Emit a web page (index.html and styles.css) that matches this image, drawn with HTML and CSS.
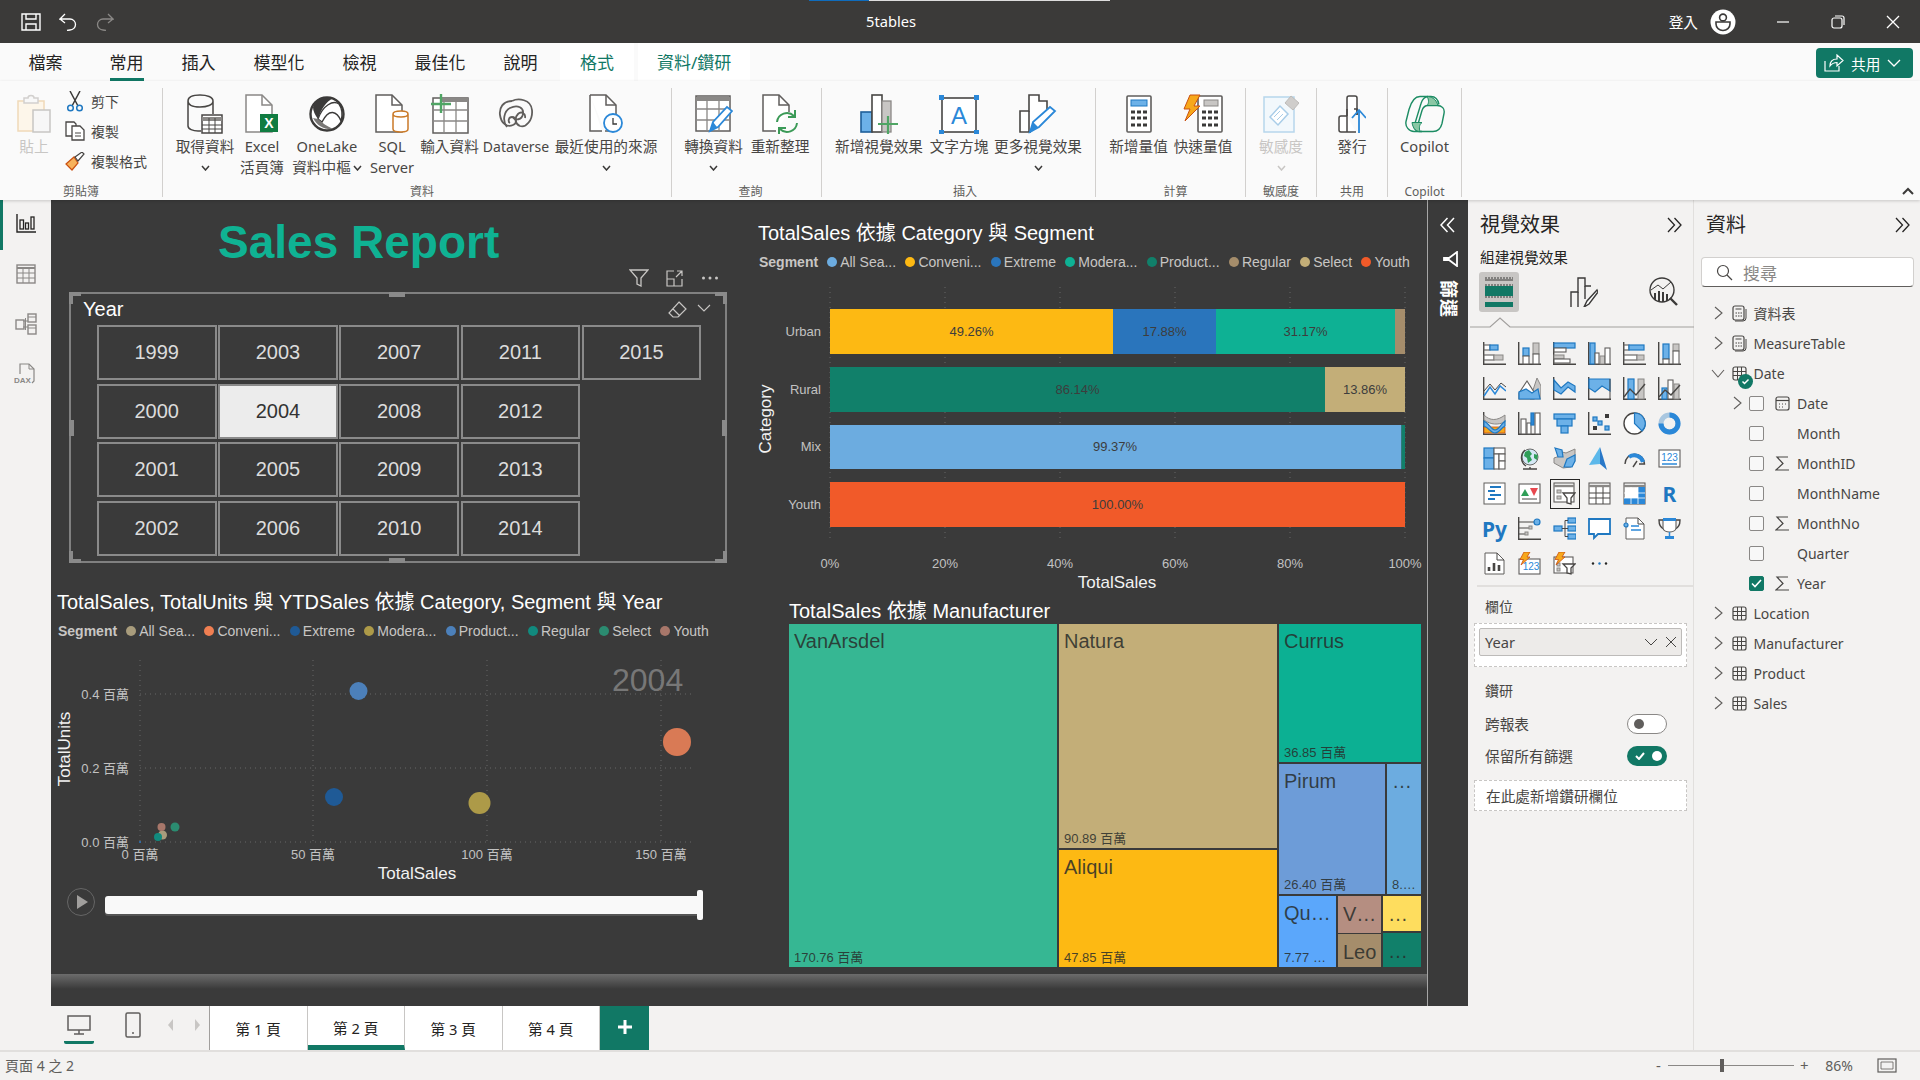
FILE: index.html
```html
<!DOCTYPE html>
<html lang="zh-Hant">
<head>
<meta charset="utf-8">
<title>5tables - Power BI Desktop</title>
<link rel="stylesheet" href="styles.css">
</head>
<body>
<header class="titlebar">
  <div class="progress"><i class="p1"></i><i class="p2"></i></div>
  <div class="tb-left">
    <svg class="ic-save" width="20" height="18" viewBox="0 0 20 18"><path d="M1 1H19V17H1ZM5 1V6H15V1M5 17V11H15V17" fill="none" stroke="#fff" stroke-width="1.4"/></svg>
    <svg class="ic-undo" width="18" height="18" viewBox="0 0 18 18"><path d="M6 1L1 6H11A5.5 5.5 0 0 1 11 17L8 17.500M1 6L6 10" fill="none" stroke="#fff" stroke-width="1.3"/></svg>
    <svg class="ic-redo" width="18" height="18" viewBox="0 0 18 18"><path d="M12 1L17 6H7A5.500 5.500 0 0 0 7 17L10 17.500M17 6L12 10" fill="none" stroke="#8a8886" stroke-width="1.3"/></svg>
  </div>
  <div class="doc-title">5tables</div>
  <div class="tb-right">
    <span class="signin">登入</span>
    <svg class="avatar" width="26" height="26" viewBox="0 0 26 26"><circle cx="13" cy="13" r="12.500" fill="#fff"/><circle cx="13" cy="8.500" r="3.400" fill="none" stroke="#3b3a39" stroke-width="1.600"/><path d="M6 13H20V15A7 6.500 0 0 1 6 15Z" fill="none" stroke="#3b3a39" stroke-width="1.600"/></svg>
    <svg class="win w-min" width="14" height="14" viewBox="0 0 14 14"><path d="M1 7H13" stroke="#fff" stroke-width="1.200"/></svg>
    <svg class="win w-max" width="14" height="14" viewBox="0 0 14 14"><rect x="1" y="3" width="10" height="10" rx="2" fill="none" stroke="#fff" stroke-width="1.200"/><path d="M4 1H11A2 2 0 0 1 13 3V10" fill="none" stroke="#fff" stroke-width="1.200"/></svg>
    <svg class="win w-close" width="14" height="14" viewBox="0 0 14 14"><path d="M1 1L13 13M13 1L1 13" stroke="#fff" stroke-width="1.300"/></svg>
  </div>
</header>

<nav class="tabs">
  <span class="tab t-first">檔案</span>
  <span class="tab active">常用</span>
  <span class="tab">插入</span>
  <span class="tab">模型化</span>
  <span class="tab">檢視</span>
  <span class="tab">最佳化</span>
  <span class="tab">說明</span>
  <span class="tab ctx">格式</span>
  <span class="tab ctx ctx2">資料/鑽研</span>
  <button class="share">
    <svg width="20" height="18" viewBox="0 0 20 18"><path d="M1 7V17H15V12M6 12C6 7 9 5 13 5V1L19 6.500L13 12V8.500C10 8.500 8 9.500 6 12Z" fill="none" stroke="#fff" stroke-width="1.200"/></svg>
    <span>共用</span>
    <svg width="14" height="8" viewBox="0 0 14 8"><path d="M1 1L7 7L13 1" fill="none" stroke="#fff" stroke-width="1.300"/></svg>
  </button>
</nav>

<section class="ribbon">
  <div class="group g-clip">
    <div class="g-body">
      <div class="rb w58 dis">
        <svg width="34" height="38" viewBox="0 0 34 38"><rect x="1" y="6" width="26" height="30" fill="#fdf6ea" stroke="#f0d9b8" stroke-width="1.500"/><path d="M7 6V3H11A3 2.500 0 0 1 17 3H21V8H7Z" fill="#f8f8f8" stroke="#d2d0ce" stroke-width="1.500"/><rect x="16" y="15" width="17" height="22" fill="#f7f7f7" stroke="#c8c6c4" stroke-width="1.500"/></svg>
        <span class="lb">貼上</span>
      </div>
      <div class="small-col">
        <div class="sm"><svg width="16" height="21" viewBox="0 0 16 21"><path d="M3 0L11 15M13 0L5 15" stroke="#3b3a39" stroke-width="1.500"/><circle cx="3.500" cy="17" r="2.800" fill="none" stroke="#1f78c1" stroke-width="1.500"/><circle cx="12.500" cy="17" r="2.800" fill="none" stroke="#1f78c1" stroke-width="1.500"/></svg><span>剪下</span></div>
        <div class="sm"><svg width="20" height="20" viewBox="0 0 20 20"><path d="M1 1H9L11 3V15H1Z" fill="#fff" stroke="#484644" stroke-width="1.300"/><path d="M7 5H15L19 9V19H7Z" fill="#fff" stroke="#484644" stroke-width="1.300"/><path d="M10 12H16M10 15H16" stroke="#484644"/></svg><span>複製</span></div>
        <div class="sm"><svg width="20" height="19" viewBox="0 0 20 19"><path d="M1 12L9 5L13 11L7 18Z" fill="#f7b25c" stroke="#ca5010" stroke-width="1.200"/><path d="M10 5L17 0L19 2L13 9Z" fill="#fff" stroke="#484644" stroke-width="1.200"/></svg><span>複製格式</span></div>
      </div>
    </div>
    <div class="g-label">剪貼簿</div>
  </div>

  <div class="group g-data">
    <div class="g-body">
      <div class="rb w64">
        <svg width="36" height="40" viewBox="0 0 36 40"><path d="M1 7V32C1 35 6 37 11 37H14M1 7C1 3 6 1 13 1S26 3 26 7V20M1 7C1 11 6 13 13 13S26 11 26 7" fill="none" stroke="#484644" stroke-width="1.500"/><rect x="15" y="21" width="20" height="18" fill="#fff" stroke="#484644" stroke-width="1.500"/><path d="M15 25H35" stroke="#8a8886" stroke-width="4"/><path d="M15 31H35M15 35H35M22 24V39M28 24V39" stroke="#484644" stroke-width="1"/></svg>
        <span class="lb">取得資料</span><svg class="chev" width="9" height="6" viewBox="0 0 9 6"><path d="M1 1L4.500 5L8 1" fill="none" stroke="#3b3a39" stroke-width="1.500"/></svg>
      </div>
      <div class="rb w50">
        <svg width="34" height="40" viewBox="0 0 34 40"><path d="M1 1H17L27 11V38H1Z" fill="#fff" stroke="#8a8886" stroke-width="1.500"/><path d="M17 1V11H27" fill="none" stroke="#8a8886" stroke-width="1.500"/><rect x="15" y="20" width="18" height="18" fill="#107c41"/><text x="24" y="34" class="xl">X</text></svg>
        <span class="lb">Excel<br>活頁簿</span>
      </div>
      <div class="rb w80">
        <svg width="36" height="38" viewBox="0 0 36 38"><circle cx="18" cy="19" r="16.500" fill="#fff" stroke="#3b3a39" stroke-width="2.400"/><path d="M4 12C8 3 15 0 24 3C17 7 12 14 9 24C6 20 4 16 4 12Z" fill="#3b3a39"/><path d="M9 24C14 10 24 5 30 9C33 13 34 20 32 26C28 16 20 13 13 27Z" fill="#fff" stroke="#3b3a39" stroke-width="1.400"/><path d="M4 23C8 31 16 35 24 34C18 31 13 28 9 24Z" fill="#7a7876"/></svg>
        <span class="lb">OneLake<br><span class="inl">資料中樞<svg class="chev-in" width="9" height="6" viewBox="0 0 9 6"><path d="M1 1L4.500 5L8 1" fill="none" stroke="#3b3a39" stroke-width="1.500"/></svg></span></span>
      </div>
      <div class="rb w50">
        <svg width="34" height="40" viewBox="0 0 34 40"><path d="M1 1H17L27 11V38H1Z" fill="#fff" stroke="#605e5c" stroke-width="1.500"/><path d="M17 1V11H27" fill="none" stroke="#605e5c" stroke-width="1.500"/><path d="M18 20V35C18 37 22 38 26 38S33 37 33 35V20C33 18 30 17 26 17S18 18 18 20ZM18 20C18 22 22 23 26 23S33 22 33 20" fill="#fff" stroke="#ca7a28" stroke-width="1.500"/></svg>
        <span class="lb">SQL<br>Server</span>
      </div>
      <div class="rb w65">
        <svg width="38" height="40" viewBox="0 0 38 40"><rect x="2" y="4" width="35" height="35" fill="#fff" stroke="#605e5c" stroke-width="1.500"/><path d="M10 6H37" stroke="#8a8886" stroke-width="4"/><path d="M2 16H37M2 27H37M13 4V39M25 4V39" stroke="#8a8886" stroke-width="1.300"/><path d="M10 0V19M0 10H20" stroke="#4fa564" stroke-width="2.400"/></svg>
        <span class="lb">輸入資料</span>
      </div>
      <div class="rb w68">
        <svg class="dv" width="36" height="30" viewBox="0 0 36 30"><path d="M14 2C5 2 1 9 2 16C3 24 9 29 15 26C20 24 18 18 14 18C10 18 10 23 12 24" fill="none" stroke="#605e5c" stroke-width="1.800"/><path d="M9 28C4 22 6 12 12 9C20 5 26 9 25 15C24 21 17 22 15 18M14 2C20-1 33 0 34 11C35 21 28 29 22 27C17 25 16 19 20 15C23 12 28 14 27 19" fill="none" stroke="#605e5c" stroke-width="1.800"/></svg>
        <span class="lb lat">Dataverse</span>
      </div>
      <div class="rb w112">
        <svg width="34" height="40" viewBox="0 0 34 40"><path d="M1 1H17L27 11V37H16M1 1V37H13" fill="#fff" stroke="#605e5c" stroke-width="1.500"/><path d="M17 1V11H27" fill="none" stroke="#605e5c" stroke-width="1.500"/><circle cx="24" cy="29" r="9" fill="#fff" stroke="#2b88d8" stroke-width="1.800"/><path d="M24 24V30H28" fill="none" stroke="#3b3a39" stroke-width="1.300"/></svg>
        <span class="lb">最近使用的來源</span><svg class="chev" width="9" height="6" viewBox="0 0 9 6"><path d="M1 1L4.500 5L8 1" fill="none" stroke="#3b3a39" stroke-width="1.500"/></svg>
      </div>
    </div>
    <div class="g-label">資料</div>
  </div>

  <div class="group g-query">
    <div class="g-body">
      <div class="rb w67">
        <svg width="38" height="40" viewBox="0 0 38 40"><rect x="1" y="2" width="34" height="35" fill="#fff" stroke="#605e5c" stroke-width="1.500"/><path d="M1 5H35" stroke="#8a8886" stroke-width="4"/><path d="M1 15H35M1 26H35M12 4V37M24 4V37" stroke="#8a8886" stroke-width="1.300"/><path d="M15 37L18 28L32 13L37 17L23 33Z" fill="#fff" stroke="#2b88d8" stroke-width="1.800"/><path d="M15 38L18 28L22 33Z" fill="#2b88d8"/></svg>
        <span class="lb">轉換資料</span><svg class="chev" width="9" height="6" viewBox="0 0 9 6"><path d="M1 1L4.500 5L8 1" fill="none" stroke="#3b3a39" stroke-width="1.500"/></svg>
      </div>
      <div class="rb w66">
        <svg width="36" height="40" viewBox="0 0 36 40"><path d="M14 37H1V1H17L27 11V18" fill="#fff" stroke="#605e5c" stroke-width="1.500"/><path d="M17 1V11H27" fill="none" stroke="#605e5c" stroke-width="1.500"/><path d="M15 28A10 10 0 0 1 32 22M35 29A10 10 0 0 1 18 35" fill="none" stroke="#3b9a57" stroke-width="2"/><path d="M33 16V23H26M17 41V34H24" fill="none" stroke="#3b9a57" stroke-width="2"/></svg>
        <span class="lb">重新整理</span>
      </div>
    </div>
    <div class="g-label">查詢</div>
  </div>

  <div class="group g-insert">
    <div class="g-body">
      <div class="rb w88">
        <svg width="38" height="40" viewBox="0 0 38 40"><rect x="1" y="18" width="11" height="20" fill="#6cb1e8" stroke="#1f5f99" stroke-width="1.600"/><rect x="12" y="1" width="10" height="37" fill="#fff" stroke="#484644" stroke-width="1.600"/><rect x="22" y="7" width="9" height="31" fill="#c8c6c4" stroke="#8a8886" stroke-width="1.300"/><path d="M28 22V40M18 30H38" stroke="#4fa564" stroke-width="2.200"/></svg>
        <span class="lb">新增視覺效果</span>
      </div>
      <div class="rb w72">
        <svg width="40" height="40" viewBox="0 0 40 40"><rect x="3" y="4" width="34" height="34" fill="#fff" stroke="#3b3a39" stroke-width="1.500"/><rect x="0" y="1" width="5" height="5" fill="#2b88d8"/><rect x="35" y="1" width="5" height="5" fill="#2b88d8"/><rect x="0" y="36" width="5" height="5" fill="#2b88d8"/><rect x="35" y="36" width="5" height="5" fill="#2b88d8"/><text x="20" y="30" class="tx-a">A</text></svg>
        <span class="lb">文字方塊</span>
      </div>
      <div class="rb w86">
        <svg width="38" height="40" viewBox="0 0 38 40"><path d="M12 38H1V17H10V1H20V7H28V18" fill="#fff" stroke="#484644" stroke-width="1.600"/><path d="M10 17V38" stroke="#484644" stroke-width="1.600"/><path d="M11 38L14 28L31 13L36 17L20 33Z" fill="#fff" stroke="#2b88d8" stroke-width="1.800"/><path d="M11 39L14 28L19 33Z" fill="#2b88d8"/></svg>
        <span class="lb">更多視覺效果</span><svg class="chev" width="9" height="6" viewBox="0 0 9 6"><path d="M1 1L4.500 5L8 1" fill="none" stroke="#3b3a39" stroke-width="1.500"/></svg>
      </div>
    </div>
    <div class="g-label">插入</div>
  </div>

  <div class="group g-calc">
    <div class="g-body">
      <div class="rb w65">
        <svg width="26" height="38" viewBox="0 0 26 38"><rect x="1" y="1" width="24" height="36" rx="1" fill="#fff" stroke="#605e5c" stroke-width="1.600"/><rect x="5" y="5" width="16" height="6" fill="#6cb1e8" stroke="#1f78c1"/><path d="M5 17H9M11 17H15M17 17H21M5 23H9M11 23H15M17 23H21M5 30H9M11 30H15M17 30H21" stroke="#3b3a39" stroke-width="3"/></svg>
        <span class="lb">新增量值</span>
      </div>
      <div class="rb w64">
        <svg width="40" height="38" viewBox="0 0 40 38"><rect x="15" y="1" width="24" height="36" rx="1" fill="#fff" stroke="#605e5c" stroke-width="1.600"/><rect x="21" y="5" width="14" height="6" fill="#c8c6c4" stroke="#8a8886"/><path d="M19 17H23M25 17H29M31 17H35M19 23H23M25 23H29M31 23H35M19 30H23M25 30H29M31 30H35" stroke="#3b3a39" stroke-width="3"/><path d="M7 0H17L11 11H17L2 26L7 14H1Z" fill="#f7a81b" stroke="#ca5010"/></svg>
        <span class="lb">快速量值</span>
      </div>
    </div>
    <div class="g-label">計算</div>
  </div>

  <div class="group g-sens">
    <div class="g-body">
      <div class="rb wfull dis">
        <svg width="36" height="38" viewBox="0 0 36 38"><rect x="1" y="2" width="30" height="35" fill="#f2f8fc" stroke="#b7d6ec" stroke-width="1.500"/><path d="M7 22L17 11L25 19L15 30Z" fill="#fff" stroke="#a9cde8" stroke-width="1.500"/><path d="M11 22L17 16M14 25L20 19" stroke="#a9cde8"/><path d="M22 8L28 1L36 8L30 15Z" fill="#cfcdcb" stroke="#bdbbb9"/></svg>
        <span class="lb">敏感度</span><svg class="chev" width="9" height="6" viewBox="0 0 9 6"><path d="M1 1L4.500 5L8 1" fill="none" stroke="#c8c6c4" stroke-width="1.500"/></svg>
      </div>
    </div>
    <div class="g-label">敏感度</div>
  </div>

  <div class="group g-share">
    <div class="g-body">
      <div class="rb wfull">
        <svg width="28" height="38" viewBox="0 0 28 38"><path d="M9 21V3A2 2 0 0 1 11 1H17A2 2 0 0 1 19 3V20M9 21H3A2 2 0 0 0 1 23V35A2 2 0 0 0 3 37H18" fill="#fff" stroke="#484644" stroke-width="1.500"/><path d="M9 14V37M19 20V14H16" fill="none" stroke="#484644" stroke-width="1.500"/><path d="M21 38V16M14 23L21 15L28 23" fill="none" stroke="#2b88d8" stroke-width="1.800"/></svg>
        <span class="lb">發行</span>
      </div>
    </div>
    <div class="g-label">共用</div>
  </div>

  <div class="group g-copilot">
    <div class="g-body">
      <div class="rb wfull">
        <svg width="40" height="37" viewBox="0 0 40 37"><path class="cp" d="M17 36H9C4 36 0 31 1 26L4 14C6 7 9 1 15 1H26C31 1 33 4 34 9"/><path class="cp" d="M23 1C20 1 17 4 16 8L9 31C9 34 12 36 15 36H28C33 36 36 32 37 28L39 18C40 13 37 10 32 10H23C20 10 18 12 17 15L12 32"/><path class="cpf" d="M22 1C26 1 31 3 33 10H22C24 8 24 4 22 1ZM15 36C12 36 8 34 7 27H17C14 29 14 33 15 36Z"/></svg>
        <span class="lb">Copilot</span>
      </div>
    </div>
    <div class="g-label">Copilot</div>
  </div>
  <svg class="collapse" width="12" height="8" viewBox="0 0 12 8"><path d="M1 7L6 2L11 7" fill="none" stroke="#3b3a39" stroke-width="2"/></svg>
</section>

<main class="workspace">
  <aside class="rail">
    <div class="rail-item on"><svg width="20" height="20" viewBox="0 0 20 20"><path d="M1 0V18H20" fill="none" stroke="#252423" stroke-width="1.400"/><rect x="4" y="6" width="3.500" height="9" fill="none" stroke="#252423" stroke-width="1.300"/><rect x="9.500" y="9" width="3" height="6" fill="none" stroke="#252423" stroke-width="1.300"/><rect x="15" y="3" width="3" height="12" fill="none" stroke="#252423" stroke-width="1.300"/></svg></div>
    <div class="rail-item"><svg width="20" height="20" viewBox="0 0 20 20"><rect x="1" y="1" width="18" height="18" fill="none" stroke="#8a8886" stroke-width="1.400"/><path d="M1 4H19" stroke="#8a8886" stroke-width="2"/><path d="M1 9H19M1 14H19M7 4V19M13 4V19" stroke="#8a8886"/></svg></div>
    <div class="rail-item"><svg width="22" height="22" viewBox="0 0 22 22"><path d="M8 8H13M8 14H13M10.500 5V17" fill="none" stroke="#8a8886"/><rect x="1" y="7" width="8" height="9" fill="none" stroke="#8a8886" stroke-width="1.400"/><rect x="13" y="1" width="8" height="8" fill="none" stroke="#8a8886" stroke-width="1.400"/><rect x="13" y="12" width="8" height="9" fill="none" stroke="#8a8886" stroke-width="1.400"/><path d="M13 4H21M13 15H21" stroke="#8a8886"/></svg></div>
    <div class="rail-item"><svg width="24" height="22" viewBox="0 0 24 22"><path d="M6 11V1H15L20 6V18L18 20" fill="none" stroke="#8a8886" stroke-width="1.200"/><path d="M15 1V6H20" fill="none" stroke="#8a8886"/><text x="0" y="20" class="dax">DAX</text></svg></div>
  </aside>

  <div class="center">
    <div class="canvas-row">
      <div class="canvas">
        <div class="page-shadow"></div>
        <h1 class="report-title">Sales Report</h1>

        <div class="vis-tools">
          <svg width="20" height="18" viewBox="0 0 20 18"><path d="M1 1H19L12 9V17L8 15V9Z" fill="none" stroke="#c8c6c4" stroke-width="1.300"/></svg>
          <svg width="18" height="18" viewBox="0 0 18 18"><path d="M8 2H1V17H16V10M1 10H8V17M11 2H16V7M16 2L10 8" fill="none" stroke="#c8c6c4" stroke-width="1.200"/></svg>
          <svg width="18" height="6" viewBox="0 0 18 6"><circle cx="2.500" cy="3" r="1.500" fill="#c8c6c4"/><circle cx="9" cy="3" r="1.500" fill="#c8c6c4"/><circle cx="15.500" cy="3" r="1.500" fill="#c8c6c4"/></svg>
        </div>

        <section class="slicer">
          <i class="h h-tl"></i><i class="h h-tr"></i><i class="h h-bl"></i><i class="h h-br"></i><i class="m mt"></i><i class="m mb"></i><i class="m ml"></i><i class="m mr"></i>
          <div class="slicer-head">
            <span>Year</span>
            <div class="slicer-tools">
              <svg width="20" height="18" viewBox="0 0 20 18"><path d="M11 1L18 8L10 16H5L1 12ZM5 8L12 15" fill="none" stroke="#c8c6c4" stroke-width="1.200"/></svg>
              <svg class="sl-chev" width="14" height="8" viewBox="0 0 14 8"><path d="M1 1L7 7L13 1" fill="none" stroke="#c8c6c4" stroke-width="1.100"/></svg>
            </div>
          </div>
          <div class="year-grid">
            <div class="yr">1999</div><div class="yr">2000</div><div class="yr">2001</div><div class="yr">2002</div>
            <div class="yr">2003</div><div class="yr sel">2004</div><div class="yr">2005</div><div class="yr">2006</div>
            <div class="yr">2007</div><div class="yr">2008</div><div class="yr">2009</div><div class="yr">2010</div>
            <div class="yr">2011</div><div class="yr">2012</div><div class="yr">2013</div><div class="yr">2014</div>
            <div class="yr">2015</div>
          </div>
        </section>

        <section class="visual v-scatter">
          <h2 class="v-title">TotalSales, TotalUnits 與 YTDSales 依據 Category, Segment 與 Year</h2>
          <div class="legend lg-s">
            <b>Segment</b>
            <span><i class="d c-as"></i>All Sea...</span><span><i class="d c-co"></i>Conveni...</span><span><i class="d c-ex"></i>Extreme</span><span><i class="d c-mo"></i>Modera...</span><span><i class="d c-pr"></i>Product...</span><span><i class="d c-re"></i>Regular</span><span><i class="d c-se"></i>Select</span><span><i class="d c-yo"></i>Youth</span>
          </div>
          <svg class="chart" width="680" height="300" viewBox="57 640 680 300">
            <path class="grid" d="M140 660V842M313 660V842M487 660V842M661 660V842M140 694H695M140 768H695M140 842H695"/>
            <text class="ax end" x="129" y="699">0.4 百萬</text>
            <text class="ax end" x="129" y="773">0.2 百萬</text>
            <text class="ax end" x="129" y="847">0.0 百萬</text>
            <text class="ax mid" x="140" y="859">0 百萬</text>
            <text class="ax mid" x="313" y="859">50 百萬</text>
            <text class="ax mid" x="487" y="859">100 百萬</text>
            <text class="ax mid" x="661" y="859">150 百萬</text>
            <text class="atitle mid" x="417" y="879">TotalSales</text>
            <text class="atitle mid" x="70" y="749" transform="rotate(-90 70 749)">TotalUnits</text>
            <text class="play-yr" x="612" y="691">2004</text>
            <circle cx="358.500" cy="691" r="9" fill="#4c80ba"/>
            <circle cx="677" cy="742" r="14" fill="#d97a55"/>
            <circle cx="334" cy="797" r="9" fill="#1f5a96"/>
            <circle cx="479.500" cy="803" r="11" fill="#ad9a48"/>
            <circle cx="162.500" cy="835" r="4.500" fill="#a89c7c"/>
            <circle cx="158" cy="837" r="4" fill="#118a7e"/>
            <circle cx="161.500" cy="827" r="4" fill="#a8776a"/>
            <circle cx="175" cy="827" r="4.500" fill="#2b8b70"/>
            <circle cx="140" cy="842" r="1" fill="#2b75bc"/>
            <circle cx="81" cy="902" r="13.500" fill="none" stroke="#666"/>
            <path d="M77 895V909L88 902Z" fill="#a19f9d"/>
            <rect x="105" y="897" width="595" height="19" rx="3" fill="#555"/>
            <rect x="105" y="896" width="595" height="18" rx="3" fill="#f9f9f9"/>
            <rect x="697" y="890" width="6" height="30" rx="2" fill="#f9f9f9"/>
          </svg>
        </section>

        <section class="visual v-bars">
          <h2 class="v-title">TotalSales 依據 Category 與 Segment</h2>
          <div class="legend lg-b">
            <b>Segment</b>
            <span><i class="d b-as"></i>All Sea...</span><span><i class="d b-co"></i>Conveni...</span><span><i class="d b-ex"></i>Extreme</span><span><i class="d b-mo"></i>Modera...</span><span><i class="d b-pr"></i>Product...</span><span><i class="d b-re"></i>Regular</span><span><i class="d b-se"></i>Select</span><span><i class="d b-yo"></i>Youth</span>
          </div>
          <svg class="chart" width="668" height="329" viewBox="758 271 668 329">
            <path class="grid" d="M830 287V540M945 287V540M1060 287V540M1175 287V540M1290 287V540M1405 287V540"/>
            <rect x="830" y="309" width="283" height="45" fill="#fdb913"/><rect x="1113" y="309" width="103" height="45" fill="#2a75bc"/><rect x="1216" y="309" width="179" height="45" fill="#0eb194"/><rect x="1395" y="309" width="10" height="45" fill="#a58d6b"/>
            <rect x="830" y="367" width="495" height="45" fill="#11806a"/><rect x="1325" y="367" width="80" height="45" fill="#c3ae78"/>
            <rect x="830" y="425" width="571.500" height="44" fill="#6cace0"/><rect x="1401.500" y="425" width="3.500" height="44" fill="#11806a"/>
            <rect x="830" y="482" width="575" height="45" fill="#f15a29"/>
            <text class="dl mid" x="971.500" y="336">49.26%</text>
            <text class="dl mid" x="1164.500" y="336">17.88%</text>
            <text class="dl mid" x="1305.500" y="336">31.17%</text>
            <text class="dl mid" x="1077.500" y="394">86.14%</text>
            <text class="dl mid" x="1365" y="394">13.86%</text>
            <text class="dl mid" x="1115" y="451">99.37%</text>
            <text class="dl mid" x="1117.500" y="509">100.00%</text>
            <text class="ax end" x="821" y="336">Urban</text>
            <text class="ax end" x="821" y="394">Rural</text>
            <text class="ax end" x="821" y="451">Mix</text>
            <text class="ax end" x="821" y="509">Youth</text>
            <text class="ax mid" x="830" y="568">0%</text>
            <text class="ax mid" x="945" y="568">20%</text>
            <text class="ax mid" x="1060" y="568">40%</text>
            <text class="ax mid" x="1175" y="568">60%</text>
            <text class="ax mid" x="1290" y="568">80%</text>
            <text class="ax mid" x="1405" y="568">100%</text>
            <text class="atitle mid" x="1117" y="588">TotalSales</text>
            <text class="atitle mid" x="771" y="419" transform="rotate(-90 771 419)">Category</text>
          </svg>
        </section>

        <section class="visual v-tree">
          <h2 class="v-title">TotalSales 依據 Manufacturer</h2>
          <div class="tm">
            <div class="cell tm-van"><span class="nm">VanArsdel</span><span class="val">170.76 百萬</span></div>
            <div class="tm-col tm-mid">
              <div class="cell tm-nat"><span class="nm">Natura</span><span class="val">90.89 百萬</span></div>
              <div class="cell tm-ali"><span class="nm">Aliqui</span><span class="val">47.85 百萬</span></div>
            </div>
            <div class="tm-col tm-right">
              <div class="cell tm-cur"><span class="nm">Currus</span><span class="val">36.85 百萬</span></div>
              <div class="tm-row tm-r2">
                <div class="cell tm-pir"><span class="nm">Pirum</span><span class="val">26.40 百萬</span></div>
                <div class="cell tm-dot"><span class="nm">…</span><span class="val">8.…</span></div>
              </div>
              <div class="tm-row tm-r3">
                <div class="cell tm-qu"><span class="nm">Qu…</span><span class="val">7.77 …</span></div>
                <div class="tm-col tm-c2">
                  <div class="cell tm-v"><span class="nm">V…</span></div>
                  <div class="cell tm-leo"><span class="nm">Leo</span></div>
                </div>
                <div class="tm-col tm-c3">
                  <div class="cell tm-yl"><span class="nm">…</span></div>
                  <div class="cell tm-tl"><span class="nm">…</span></div>
                </div>
              </div>
            </div>
          </div>
        </section>
      </div>

      <aside class="filters">
        <svg class="f-coll" width="15" height="16" viewBox="0 0 15 16"><path d="M7.500 1L1 8L7.500 15M14 1L7.500 8L14 15" fill="none" stroke="#fff" stroke-width="1.500"/></svg>
        <svg class="f-fun" width="15" height="16" viewBox="0 0 15 16"><path d="M14 1V15L6 9H1V7H6Z" fill="none" stroke="#fff" stroke-width="1.800"/></svg>
        <span class="f-text">篩選</span>
      </aside>
    </div>

    <footer class="pagebar">
      <div class="view-switch">
        <div class="vs on"><svg width="24" height="20" viewBox="0 0 24 20"><rect x="1" y="1" width="22" height="14" fill="none" stroke="#605e5c" stroke-width="1.500"/><path d="M12 15V19M7 19H17" stroke="#605e5c" stroke-width="1.500"/></svg></div>
        <div class="vs vs-phone"><svg width="16" height="26" viewBox="0 0 16 26"><rect x="1" y="1" width="14" height="24" rx="1.500" fill="none" stroke="#605e5c" stroke-width="1.500"/><circle cx="8" cy="21" r="1" fill="#605e5c"/></svg></div>
        <svg class="arr a-l" width="7" height="14" viewBox="0 0 7 14"><path d="M6 1L1 7L6 13Z" fill="#c8c6c4"/></svg>
        <svg class="arr a-r" width="7" height="14" viewBox="0 0 7 14"><path d="M1 1L6 7L1 13Z" fill="#c8c6c4"/></svg>
      </div>
      <div class="ptab">第 1 頁</div>
      <div class="ptab cur">第 2 頁</div>
      <div class="ptab">第 3 頁</div>
      <div class="ptab">第 4 頁</div>
      <div class="padd"><svg width="14" height="14" viewBox="0 0 14 14"><path d="M7 0V14M0 7H14" stroke="#fff" stroke-width="3"/></svg></div>
    </footer>
  </div>

  <aside class="viz">
    <div class="pane-head"><span>視覺效果</span><svg width="15" height="16" viewBox="0 0 15 16"><path d="M1 1L7.500 8L1 15M7.500 1L14 8L7.500 15" fill="none" stroke="#252423" stroke-width="1.300"/></svg></div>
    <div class="sub">組建視覺效果</div>
    <div class="vtabs">
      <div class="vt on"><svg width="28" height="30" viewBox="0 0 28 30"><path d="M0 1H28M0 8H28M0 20H28M0 28H28" stroke="#3b3a39" stroke-dasharray="2 1" stroke-width="1"/><path d="M0 3H28" stroke="#3b3a39"/><rect x="0" y="9" width="28" height="10" fill="#117865"/><rect x="0" y="25" width="28" height="5" fill="#117865"/></svg></div>
      <div class="vt"><svg width="28" height="30" viewBox="0 0 28 30"><path d="M1 30V15H8V1H15V9H21" fill="none" stroke="#3b3a39" stroke-width="1.400"/><path d="M8 15V30M15 9V22" fill="none" stroke="#3b3a39" stroke-width="1.400"/><path d="M14 30L17 24L27 13L28 15L19 27Z" fill="#fff" stroke="#3b3a39" stroke-width="1.400"/></svg></div>
      <div class="vt"><svg width="30" height="30" viewBox="0 0 30 30"><circle cx="13" cy="13" r="12" fill="none" stroke="#3b3a39" stroke-width="1.400"/><path d="M2 13L9 8L14 12L22 5" fill="none" stroke="#3b3a39"/><path d="M6 16V23M10 14V25M14 15V25M18 17V24" stroke="#3b3a39" stroke-width="2"/><path d="M21 21L28 28" stroke="#3b3a39" stroke-width="2.400"/></svg></div>
    </div>
    <div class="notch"><svg width="225" height="16" viewBox="0 0 225 16"><path d="M1 15H21L31 6L41 15H225" fill="none" stroke="#a19f9d" stroke-width="1.200"/></svg></div>

    <div class="vgrid">
      <svg class="vi" viewBox="0 0 23 23"><path class="l" d="M.7 0V22.300H23"/><rect class="n" x="1" y="3" width="6" height="5"/><rect class="f" x="7" y="3" width="8" height="5"/><rect class="n" x="1" y="13" width="10" height="5"/><rect class="s" x="11" y="13" width="9" height="5"/></svg>
      <svg class="vi" viewBox="0 0 23 23"><path class="l" d="M.7 0V22.300H23"/><rect class="f" x="5" y="6" width="6" height="8"/><rect class="n" x="5" y="14" width="6" height="8"/><rect class="s" x="15" y="1" width="6" height="11"/><rect class="n" x="15" y="12" width="6" height="10"/></svg>
      <svg class="vi" viewBox="0 0 23 23"><path class="l" d="M.7 0V22.300H23"/><rect class="f" x="1" y="1" width="21" height="5"/><rect class="n" x="1" y="6" width="12" height="4"/><rect class="s" x="1" y="13" width="10" height="4"/><rect class="n" x="1" y="17" width="16" height="4"/></svg>
      <svg class="vi" viewBox="0 0 23 23"><path class="l" d="M.7 0V22.300H23"/><rect class="f" x="2" y="1" width="5" height="21"/><rect class="n" x="7" y="11" width="4" height="11"/><rect class="s" x="12" y="14" width="5" height="8"/><rect class="n" x="17" y="6" width="5" height="16"/></svg>
      <svg class="vi" viewBox="0 0 23 23"><path class="l" d="M.7 0V22.300H23"/><rect class="n" x="1" y="3" width="5" height="5"/><rect class="f" x="6" y="3" width="15" height="5"/><rect class="n" x="1" y="13" width="13" height="5"/><rect class="s" x="14" y="13" width="7" height="5"/></svg>
      <svg class="vi" viewBox="0 0 23 23"><path class="l" d="M.7 0V22.300H23"/><rect class="f" x="5" y="2" width="6" height="15"/><rect class="n" x="5" y="17" width="6" height="5"/><rect class="s" x="15" y="2" width="6" height="7"/><rect class="n" x="15" y="9" width="6" height="13"/></svg>

      <svg class="vi" viewBox="0 0 23 23"><path class="l" d="M.7 0V22.300H23"/><path class="l th" d="M1 14L7 7L12 13L18 6L23 10"/><path class="bl-l" d="M1 19L7 10L12 17L17 9L23 14"/></svg>
      <svg class="vi" viewBox="0 0 23 23"><path class="s" d="M12 22L19 1L23 9V22Z"/><path class="n" d="M1 16L9 4L16 15V22H1Z"/><path class="f" d="M1 22V15L8 12L14 16L20 12L22 22Z"/></svg>
      <svg class="vi" viewBox="0 0 23 23"><path class="l" d="M.7 0V22.300H23"/><path class="f" d="M1 3L8 11L15 5L22 9V15L15 10L8 17L1 13Z"/></svg>
      <svg class="vi" viewBox="0 0 23 23"><path class="l" d="M.7 0V22.300H23"/><path class="f" d="M1 2H22V14L14 9L7 15L1 11Z"/><path class="l th" d="M22 2V22"/></svg>
      <svg class="vi" viewBox="0 0 23 23"><path class="l" d="M.7 0V22.300H23"/><rect class="f" x="5" y="2" width="6" height="20"/><rect class="s" x="15" y="2" width="6" height="20"/><path class="l" d="M1 20L7 12L13 18L22 7"/></svg>
      <svg class="vi" viewBox="0 0 23 23"><path class="l" d="M.7 0V22.300H23"/><rect class="f" x="4" y="11" width="5" height="11"/><rect class="n" x="10" y="3" width="5" height="19"/><rect class="s" x="16" y="7" width="5" height="15"/><path class="l" d="M1 20L7 13L13 18L22 8"/></svg>

      <svg class="vi" viewBox="0 0 23 23"><path class="l" d="M.7 0V22.300H23"/><path class="s" d="M1 3C7 9 14 9 22 3V10C15 13 8 13 1 8Z"/><path class="o" d="M1 15H22V21H1Z"/><path class="f" d="M1 9C6 11 8 18 12 18C16 18 18 12 22 9V14C18 16 16 21 12 21C8 21 6 16 1 14Z"/></svg>
      <svg class="vi" viewBox="0 0 23 23"><path class="l" d="M.7 0V22.300H23"/><rect class="n" x="3" y="7" width="5" height="15"/><rect class="n" x="9" y="11" width="4" height="11"/><rect class="f lt" x="13" y="1" width="3" height="12"/><rect class="n" x="17" y="1" width="5" height="21"/></svg>
      <svg class="vi" viewBox="0 0 23 23"><rect class="f" x="1" y="2" width="21" height="5"/><rect class="f" x="4" y="7" width="15" height="7"/><rect class="f" x="8" y="14" width="7" height="7"/></svg>
      <svg class="vi" viewBox="0 0 23 23"><path class="l" d="M.7 0V22.300H23"/><rect class="f" x="5" y="5" width="4" height="4"/><rect class="k" x="17" y="2" width="4" height="4"/><rect class="f" x="10" y="9" width="4" height="4"/><rect class="k" x="5" y="14" width="4" height="4"/><rect class="f" x="17" y="14" width="4" height="4"/></svg>
      <svg class="vi" viewBox="0 0 23 23"><circle class="n th2" cx="11.500" cy="11.500" r="10.500"/><path class="f" d="M11.500 1A10.500 10.500 0 0 1 19 19L11.500 11.500Z"/></svg>
      <svg class="vi" viewBox="0 0 23 23"><circle class="ring-g" cx="11.500" cy="11.500" r="8.500"/><path class="ring-b" d="M3 11.500A8.500 8.500 0 1 0 11.500 3"/></svg>

      <svg class="vi" viewBox="0 0 23 23"><rect class="f" x="1" y="1" width="10" height="10"/><rect class="f" x="1" y="11" width="10" height="11"/><rect class="n" x="11" y="1" width="11" height="6"/><rect class="n" x="11" y="7" width="5" height="15"/><rect class="n" x="16" y="7" width="6" height="7"/><rect class="n" x="16" y="14" width="6" height="8"/></svg>
      <svg class="vi" viewBox="0 0 23 23"><circle class="globe" cx="12" cy="10" r="8"/><path class="gr" d="M7 5L11 3L14 7L12 9L14 13L10 16L9 11L6 9ZM16 7L20 8L19 13L16 11Z"/><path class="l" d="M7 3A10 10 0 0 0 8 19M12 20V21.500M5 22H19"/></svg>
      <svg class="vi" viewBox="0 0 23 23"><path class="s" d="M5 4L13 6L22 2V14L18 20L10 21L1 16V11L7 9Z"/><path class="f" d="M2 1L9 3L10 10L5 10ZM14 12L22 8V14L19 20L11 20Z"/></svg>
      <svg class="vi" viewBox="0 0 23 23"><path class="az1" d="M12 0L19 23L12 17Z"/><path class="az2" d="M12 0L12 17L1 18Z"/></svg>
      <svg class="vi" viewBox="0 0 23 23"><path class="l" d="M2 17A9.500 9.500 0 0 1 21.500 17H16"/><path class="arc-b" d="M6 10A9 9 0 0 1 20 15"/><path class="l" d="M10 20L14 14"/></svg>
      <svg class="vi" viewBox="0 0 23 23"><rect class="n" x="1" y="3" width="21" height="17"/><text x="11.500" y="14" class="n123">123</text><path class="bl-l" d="M4 17H19"/></svg>

      <svg class="vi" viewBox="0 0 23 23"><rect class="n th" x="1" y="1" width="21" height="21"/><path class="bl-h" d="M7 5H18M5 9H12M7 13H18M5 17H12"/></svg>
      <svg class="vi" viewBox="0 0 23 23"><rect class="n" x="1" y="2" width="21" height="19"/><path class="gr" d="M3 14L7 7L11 14Z"/><path class="rd" d="M12 6H20L16 14Z"/><path class="l th" d="M4 17H19"/></svg>
      <div class="vi-sel"><svg class="vi" viewBox="0 0 23 23"><rect class="n" x="1" y="1" width="20" height="19"/><path class="th3" d="M1 4H21"/><rect class="s" x="4" y="8" width="4" height="3"/><rect class="s" x="4" y="14" width="4" height="3"/><path class="n dk" d="M10 11H22L18 16V22L14 21V16Z"/></svg></div>
      <svg class="vi" viewBox="0 0 23 23"><rect class="n" x="1" y="1" width="21" height="21"/><path class="th3" d="M1 4H22"/><path class="l th" d="M1 11H22M1 16H22M8 5V22M15 5V22"/></svg>
      <svg class="vi" viewBox="0 0 23 23"><rect class="n" x="1" y="1" width="21" height="21"/><path class="th3" d="M1 4H22"/><rect class="bl-f" x="15" y="5" width="7" height="17"/><rect class="bl-f" x="1" y="16" width="21" height="6"/><path class="w-l" d="M1 11H22M1 16H22M8 5V22M15 5V22"/></svg>
      <span class="vi vi-txt big-r">R</span>

      <span class="vi vi-txt big-py">Py</span>
      <svg class="vi" viewBox="0 0 23 23"><path class="l" d="M.7 0V22.300H23"/><path class="l th" d="M1 5H16M1 11H12M1 17H8"/><circle class="f" cx="19" cy="5" r="3"/><rect class="s" x="11" y="9" width="3" height="3"/><rect class="s" x="7" y="15" width="3" height="3"/></svg>
      <svg class="vi" viewBox="0 0 23 23"><rect class="f" x="1" y="9" width="8" height="5"/><rect class="f" x="15" y="1" width="8" height="5"/><rect class="f" x="15" y="9" width="8" height="5"/><rect class="f" x="15" y="17" width="8" height="5"/><path class="l th" d="M9 11.500H15M12 3.500V19.500M12 3.500H15M12 19.500H15"/></svg>
      <svg class="vi" viewBox="0 0 23 23"><path class="bubble" d="M1 2H22V17H10L6 21V17H1Z"/></svg>
      <svg class="vi" viewBox="0 0 23 23"><path class="n th" d="M3 1H15L21 7V22H3Z"/><path class="l th" d="M15 1V7H21"/><circle class="f" cx="3" cy="8" r="2"/><path class="bl-l" d="M8 9H16M8 13H18"/></svg>
      <svg class="vi" viewBox="0 0 23 23"><path class="l" d="M5 3H1C1 9 3 11 6 12M18 3H22C22 9 20 11 17 12"/><path class="n" d="M5 3H18V11C18 14 14 15 11.500 15C9 15 5 14 5 11Z"/><rect class="bl-f" x="5" y="1" width="13" height="3"/><rect class="bl-f" x="7" y="19" width="9" height="3"/><path class="bl-l" d="M11.500 15V19"/></svg>

      <svg class="vi" viewBox="0 0 23 23"><path class="n th" d="M2 1H14L21 8V22H2Z"/><path class="l th" d="M14 1V8H21"/><path class="b3" d="M6 19V15M11 19V11M16 19V13"/></svg>
      <svg class="vi" viewBox="0 0 23 23"><rect class="n" x="1" y="7" width="21" height="15"/><text x="13" y="18" class="n123">123</text><path class="o" d="M6 0H12L9 5H12L3 13L5.500 7.500H2Z"/></svg>
      <svg class="vi" viewBox="0 0 23 23"><rect class="n" x="1" y="5" width="19" height="16"/><rect class="s" x="4" y="11" width="3" height="3"/><rect class="s" x="4" y="16" width="3" height="3"/><path class="n dk" d="M10 12H22L18 16V22L14 21V16Z"/><path class="o" d="M6 0H12L9 5H12L3 13L5.500 7.500H2Z"/></svg>
      <svg class="vi" viewBox="0 0 23 23"><circle class="k-d" cx="5" cy="11.500" r="1.200"/><circle class="bl-d" cx="11.500" cy="11.500" r="1.200"/><circle class="k-d" cx="18" cy="11.500" r="1.200"/></svg>
    </div>

    <div class="fld-label l-first">欄位</div>
    <div class="well">
      <div class="pill"><span>Year</span>
        <svg class="p-ch" width="14" height="8" viewBox="0 0 14 8"><path d="M1 1L7 7L13 1" fill="none" stroke="#484644" stroke-width="1"/></svg>
        <svg class="p-x" width="10" height="10" viewBox="0 0 10 10"><path d="M0 0L10 10M10 0L0 10" stroke="#484644" stroke-width="1"/></svg>
      </div>
    </div>
    <div class="fld-label l-drill">鑽研</div>
    <div class="tg-row r1"><span>跨報表</span><i class="tg off"></i></div>
    <div class="tg-row r2"><span>保留所有篩選</span><i class="tg onn"><svg width="10" height="8" viewBox="0 0 10 8"><path d="M1 4L4 7L9 1" fill="none" stroke="#fff" stroke-width="2"/></svg></i></div>
    <div class="add-well">在此處新增鑽研欄位</div>
  </aside>

  <aside class="data">
    <div class="pane-head"><span>資料</span><svg width="15" height="16" viewBox="0 0 15 16"><path d="M1 1L7.500 8L1 15M7.500 1L14 8L7.500 15" fill="none" stroke="#252423" stroke-width="1.300"/></svg></div>
    <div class="search"><svg width="17" height="17" viewBox="0 0 17 17"><circle cx="7" cy="7" r="5.500" fill="none" stroke="#484644" stroke-width="1.200"/><path d="M11 11L16 16" stroke="#484644" stroke-width="1.300"/></svg><span>搜尋</span></div>
    <div class="tree">
      <div class="tr"><svg class="cv" width="9" height="14" viewBox="0 0 9 14"><path d="M1 1L8 7L1 13" fill="none" stroke="#605e5c" stroke-width="1.100"/></svg><svg class="ti" width="15" height="17" viewBox="0 0 15 17"><rect x="1" y="1" width="11" height="14" rx="2" fill="none" stroke="#484644" stroke-width="1.200"/><path d="M3 16H11A3 3 0 0 0 14 13V4" fill="none" stroke="#484644"/><path d="M3.500 4H9.500M3.500 8H5M6 8H7.500M8.500 8H10M3.500 11H5M6 11H7.500M8.500 11H10" stroke="#484644" stroke-width="1.200"/></svg><span>資料表</span></div>
      <div class="tr"><svg class="cv" width="9" height="14" viewBox="0 0 9 14"><path d="M1 1L8 7L1 13" fill="none" stroke="#605e5c" stroke-width="1.100"/></svg><svg class="ti" width="15" height="17" viewBox="0 0 15 17"><rect x="1" y="1" width="11" height="14" rx="2" fill="none" stroke="#484644" stroke-width="1.200"/><path d="M3 16H11A3 3 0 0 0 14 13V4" fill="none" stroke="#484644"/><path d="M3.500 4H9.500M3.500 8H5M6 8H7.500M8.500 8H10M3.500 11H5M6 11H7.500M8.500 11H10" stroke="#484644" stroke-width="1.200"/></svg><span>MeasureTable</span></div>
      <div class="tr"><svg class="cv open" width="14" height="9" viewBox="0 0 14 9"><path d="M1 1L7 8L13 1" fill="none" stroke="#605e5c" stroke-width="1.100"/></svg><span class="ti-wrap"><svg class="ti" width="15" height="15" viewBox="0 0 15 15"><rect x="1" y="1" width="13" height="13" rx="2" fill="none" stroke="#484644" stroke-width="1.200"/><path d="M1 5.500H14M1 9.500H14M5.500 1V14M9.500 1V14" stroke="#484644"/></svg><svg class="badge" width="15" height="15" viewBox="0 0 15 15"><circle cx="7.500" cy="7.500" r="7.500" fill="#117865"/><path d="M4.500 7.500L6.500 9.500L10.500 5.500" fill="none" stroke="#fff" stroke-width="1.500"/></svg></span><span>Date</span></div>
      <div class="tr ch"><svg class="cv" width="9" height="14" viewBox="0 0 9 14"><path d="M1 1L8 7L1 13" fill="none" stroke="#605e5c" stroke-width="1.100"/></svg><i class="cb"></i><span class="fi"><svg width="15" height="15" viewBox="0 0 15 15"><rect x="1" y="1" width="13" height="13" rx="2" fill="none" stroke="#484644" stroke-width="1.200"/><path d="M1 4.500H14" stroke="#484644" stroke-width="1.200"/><path d="M4 8H5M7 8H8M10 8H11M4 11H5M7 11H8" stroke="#484644"/></svg></span><span>Date</span></div>
      <div class="tr ch"><i class="cv-sp"></i><i class="cb"></i><span class="fi"></span><span>Month</span></div>
      <div class="tr ch"><i class="cv-sp"></i><i class="cb"></i><span class="fi"><svg width="14" height="15" viewBox="0 0 14 15"><path d="M13 1H2L8 7.500L1 14H14" fill="none" stroke="#484644" stroke-width="1.200"/></svg></span><span>MonthID</span></div>
      <div class="tr ch"><i class="cv-sp"></i><i class="cb"></i><span class="fi"></span><span>MonthName</span></div>
      <div class="tr ch"><i class="cv-sp"></i><i class="cb"></i><span class="fi"><svg width="14" height="15" viewBox="0 0 14 15"><path d="M13 1H2L8 7.500L1 14H14" fill="none" stroke="#484644" stroke-width="1.200"/></svg></span><span>MonthNo</span></div>
      <div class="tr ch"><i class="cv-sp"></i><i class="cb"></i><span class="fi"></span><span>Quarter</span></div>
      <div class="tr ch"><i class="cv-sp"></i><i class="cb chk"><svg width="11" height="9" viewBox="0 0 11 9"><path d="M1 4.500L4 7.500L10 1" fill="none" stroke="#fff" stroke-width="1.600"/></svg></i><span class="fi"><svg width="14" height="15" viewBox="0 0 14 15"><path d="M13 1H2L8 7.500L1 14H14" fill="none" stroke="#484644" stroke-width="1.200"/></svg></span><span>Year</span></div>
      <div class="tr"><svg class="cv" width="9" height="14" viewBox="0 0 9 14"><path d="M1 1L8 7L1 13" fill="none" stroke="#605e5c" stroke-width="1.100"/></svg><svg class="ti" width="15" height="15" viewBox="0 0 15 15"><rect x="1" y="1" width="13" height="13" rx="2" fill="none" stroke="#484644" stroke-width="1.200"/><path d="M1 5.500H14M1 9.500H14M5.500 1V14M9.500 1V14" stroke="#484644"/></svg><span>Location</span></div>
      <div class="tr"><svg class="cv" width="9" height="14" viewBox="0 0 9 14"><path d="M1 1L8 7L1 13" fill="none" stroke="#605e5c" stroke-width="1.100"/></svg><svg class="ti" width="15" height="15" viewBox="0 0 15 15"><rect x="1" y="1" width="13" height="13" rx="2" fill="none" stroke="#484644" stroke-width="1.200"/><path d="M1 5.500H14M1 9.500H14M5.500 1V14M9.500 1V14" stroke="#484644"/></svg><span>Manufacturer</span></div>
      <div class="tr"><svg class="cv" width="9" height="14" viewBox="0 0 9 14"><path d="M1 1L8 7L1 13" fill="none" stroke="#605e5c" stroke-width="1.100"/></svg><svg class="ti" width="15" height="15" viewBox="0 0 15 15"><rect x="1" y="1" width="13" height="13" rx="2" fill="none" stroke="#484644" stroke-width="1.200"/><path d="M1 5.500H14M1 9.500H14M5.500 1V14M9.500 1V14" stroke="#484644"/></svg><span>Product</span></div>
      <div class="tr"><svg class="cv" width="9" height="14" viewBox="0 0 9 14"><path d="M1 1L8 7L1 13" fill="none" stroke="#605e5c" stroke-width="1.100"/></svg><svg class="ti" width="15" height="15" viewBox="0 0 15 15"><rect x="1" y="1" width="13" height="13" rx="2" fill="none" stroke="#484644" stroke-width="1.200"/><path d="M1 5.500H14M1 9.500H14M5.500 1V14M9.500 1V14" stroke="#484644"/></svg><span>Sales</span></div>
    </div>
  </aside>
</main>

<footer class="status">
  <span class="st-text">頁面 4 之 2</span>
  <div class="zoomer">
    <span class="z-sign">-</span>
    <div class="z-track"><i class="z-thumb"></i></div>
    <span class="z-sign">+</span>
    <span class="z-pct">86%</span>
    <svg width="20" height="15" viewBox="0 0 20 15"><rect x="1" y="1" width="18" height="13" fill="none" stroke="#605e5c" stroke-width="1.200"/><path d="M4 4H16V11H4Z" fill="none" stroke="#605e5c" stroke-width=".8"/></svg>
  </div>
</footer>
</body>
</html>
```
FILE: styles.css
```css
* { box-sizing: border-box; }
html, body { margin: 0; height: 100%; }
body {
  width: 1920px; height: 1080px; overflow: hidden;
  display: flex; flex-direction: column;
  font-family: "Noto Sans", "Noto Sans CJK TC", sans-serif;
  font-size: 14.67px; color: #252423; background: #f3f2f1;
}
svg { display: block; flex: none; }
h1, h2 { margin: 0; font-weight: 400; }

/* title bar */
.titlebar { position: relative; height: 43px; flex: none; background: #3b3a39; color: #fff; display: flex; align-items: center; }
.progress { position: absolute; left: 809px; top: 0; display: flex; height: 1px; }
.p1 { width: 60px; background: #0f6cbd; }
.p2 { width: 241px; background: #ddd; }
.tb-left { width: 866px; display: flex; align-items: center; padding-left: 21px; flex: none; }
.ic-undo { margin-left: 18px; }
.ic-redo { margin-left: 19px; }
.doc-title { font-size: 14.67px; margin-top: -1px; }
.tb-right { margin-left: auto; display: flex; align-items: center; }
.signin { font-size: 14.67px; margin-right: 12px; }
.win { margin-left: 41px; }
.win.w-min { margin-left: 40px; }
.win.w-close { margin-right: 20px; }

/* tabs */
.tabs { height: 38px; flex: none; background: #fafafa; display: flex; align-items: stretch; padding-left: 9.5px; font-size: 17px; }
.tab { position: relative; display: flex; align-items: center; padding: 0 19px 2px; }
.t-first { margin-right: 9px; }
.tab.active::after { content: ""; position: absolute; left: 19px; right: 19px; bottom: 0; height: 3px; background: #117865; }
.ctx { background: #fff; color: #117865; padding: 0 20px 2px; margin-left: 3.5px; }
.ctx2 { margin-left: 4px; padding: 0 19px 2px; }
.share { margin: 5px 7px 3px auto; width: 97px; height: 30px; border: 0; border-radius: 4px; background: #117865; color: #fff; font: inherit; font-size: 14.67px; display: flex; align-items: center; gap: 7px; padding: 0 0 0 8px; }

/* ribbon */
.ribbon { position: relative; z-index: 2; height: 119px; flex: none; background: #fafafa; display: flex; padding-top: 7px; box-shadow: 0 1px 3px rgba(0,0,0,.18); }
.group { height: 109px; border-right: 1px solid #d2d0ce; display: flex; flex-direction: column; flex: none; color: #484644; }
.g-clip { width: 163px; }
.g-data { width: 509px; padding-left: 10px; }
.g-query { width: 150px; padding-left: 8px; }
.g-insert { width: 274px; padding-left: 13px; }
.g-calc { width: 150px; padding-left: 10px; }
.g-sens { width: 71px; }
.g-share { width: 71px; }
.g-copilot { width: 74px; }
.g-body { flex: 1; display: flex; min-height: 0; }
.g-label { height: 15px; line-height: 15px; font-size: 12px; text-align: center; color: #605e5c; margin-bottom: -2px; }
.rb { display: flex; flex-direction: column; align-items: center; flex: none; padding-top: 6px; text-align: center; line-height: 21px; white-space: nowrap; }
.rb > svg:first-child { height: 40px; }
.rb .lb { margin-top: 2px; display: block; }
.rb .lat { font-size: 14px; }
.rb .chev { margin-top: 8px; }
.inl { display: inline-flex; align-items: center; gap: 2px; }
.w50 { width: 50px; } .w58 { width: 58px; margin-left: 5px; } .w64 { width: 64px; } .w65 { width: 65px; } .w66 { width: 66px; } .w67 { width: 67px; } .w68 { width: 68px; } .w72 { width: 72px; } .w80 { width: 80px; } .w86 { width: 86px; } .w88 { width: 88px; } .w112 { width: 112px; } .wfull { width: 100%; }
.dis { color: #c8c6c4; }
.small-col { display: flex; flex-direction: column; margin: -2px 0 0 2px; }
.sm { height: 30px; display: flex; align-items: center; font-size: 14px; color: #484644; }
.sm svg { width: 20px; margin-right: 6px; }
.collapse { position: absolute; right: 6px; top: 106px; }
.xl { font: 700 14px "Liberation Sans", sans-serif; fill: #fff; text-anchor: middle; }
.tx-a { font: 400 24px "Liberation Sans", sans-serif; fill: #2b88d8; text-anchor: middle; }
.dax { font: 700 8px "Liberation Sans", sans-serif; fill: #8a8886; }
.cp { fill: none; stroke: #1c8c63; stroke-width: 1.400; }
.cpf { fill: #8ac7a4; stroke: #1c8c63; stroke-width: 1; }

/* workspace */
.workspace { flex: 1; display: flex; min-height: 0; }
.rail { width: 51px; flex: none; background: #f3f2f1; display: flex; flex-direction: column; }
.rail-item { height: 50px; padding-bottom: 2px; display: flex; align-items: center; justify-content: center; }
.rail-item.on { border-left: 3px solid #117865; padding-right: 3px; }
.center { width: 1417px; flex: none; display: flex; flex-direction: column; }
.canvas-row { flex: 1; display: flex; min-height: 0; }
.canvas { position: relative; flex: 1; background: #3a3a3a; overflow: hidden; font-family: "Liberation Sans", "Noto Sans CJK TC", sans-serif; color: #fff; }
.page-shadow { position: absolute; left: 0; right: 0; top: 774px; height: 15px; background: linear-gradient(#6c6c6c, #3a3a3a); }
.report-title { position: absolute; left: 167px; top: 14px; font-size: 46px; line-height: 56px; font-weight: 700; color: #0fb293; }

/* slicer */
.vis-tools { position: absolute; left: 578px; top: 69px; display: flex; align-items: center; gap: 17px; }
.slicer { position: absolute; left: 18px; top: 92px; width: 658px; height: 271px; border: 2px solid #808080; display: flex; flex-direction: column; padding: 0 0 0 26px; }
.h { position: absolute; width: 12px; height: 12px; border: 0 solid #8a8a8a; }
.h-tl { left: -2px; top: -2px; border-width: 4px 0 0 4px; }
.h-tr { right: -2px; top: -2px; border-width: 4px 4px 0 0; }
.h-bl { left: -2px; bottom: -2px; border-width: 0 0 4px 4px; }
.h-br { right: -2px; bottom: -2px; border-width: 0 4px 4px 0; }
.m { position: absolute; background: #8a8a8a; }
.mt { left: 318px; top: -2px; width: 16px; height: 5px; }
.mb { left: 318px; bottom: -2px; width: 16px; height: 5px; }
.ml { left: -2px; top: 126px; width: 5px; height: 16px; }
.mr { right: -2px; top: 126px; width: 5px; height: 16px; }
.slicer-head { height: 31px; display: flex; align-items: center; justify-content: space-between; margin-left: -14px; padding-right: 14px; font-size: 20px; }
.slicer-tools { display: flex; align-items: flex-start; gap: 9px; }
.sl-chev { margin-top: 3px; }
.year-grid { display: grid; grid-auto-flow: column; grid-template-rows: repeat(4, 55px); grid-auto-columns: 119.500px; column-gap: 1.700px; row-gap: 3.500px; }
.yr { border: 2px solid #8a8a8a; display: flex; align-items: center; justify-content: center; font-size: 20px; color: #dcdcdc; }
.yr.sel { background: #ececec; color: #333; }

/* visuals */
.visual { position: absolute; }
.v-title { font-size: 20px; line-height: 24px; white-space: nowrap; color: #fff; }
.v-scatter { left: 6px; top: 390px; width: 680px; }
.v-bars { left: 707px; top: 21px; width: 668px; }
.v-tree { left: 738px; top: 399px; width: 632px; }
.legend { margin-top: 8px; height: 18px; line-height: 18px; font-size: 14px; color: #c8c6c4; display: flex; white-space: nowrap; }
.legend b { margin: 0 9px 0 1px; }
.legend span { display: flex; align-items: center; gap: 3px; margin-right: 9.300px; }
.legend span:last-child { margin-right: 0; }
.d { width: 10px; height: 10px; border-radius: 50%; flex: none; }
.c-as { background: #a89c7c; } .c-co { background: #f07f52; } .c-ex { background: #1f5a96; } .c-mo { background: #ad9a48; } .c-pr { background: #4c80ba; } .c-re { background: #118a7e; } .c-se { background: #2b8b70; } .c-yo { background: #a8776a; }
.b-as { background: #6cace0; } .b-co { background: #fdb913; } .b-ex { background: #2a75bc; } .b-mo { background: #0eb194; } .b-pr { background: #11806a; } .b-re { background: #a58d6b; } .b-se { background: #c3ae78; } .b-yo { background: #f15a29; }
.chart { font-family: "Liberation Sans", "Noto Sans CJK TC", sans-serif; overflow: visible; }
.grid { stroke: #666; stroke-width: 1; stroke-dasharray: 1 4; fill: none; }
.ax { font-size: 13px; fill: #c2c2c2; }
.dl { font-size: 13px; fill: #3d3d3d; }
.atitle { font-size: 17px; fill: #f2f2f2; }
.end { text-anchor: end; }
.mid { text-anchor: middle; }
.play-yr { font-size: 32px; fill: #777; }

/* treemap */
.tm { margin-top: 1px; width: 632px; height: 343px; display: flex; gap: 2px; }
.tm-col { display: flex; flex-direction: column; gap: 2px; flex: none; }
.tm-row { display: flex; gap: 2px; flex: none; }
.cell { display: flex; flex-direction: column; justify-content: space-between; padding: 5px 5px 1px; overflow: hidden; white-space: nowrap; color: rgba(40,44,42,.85); flex: none; }
.nm { font-size: 20px; line-height: 25px; }
.val { font-size: 13px; line-height: 16px; }
.tm-van { width: 268px; height: 343px; background: #36b793; }
.tm-mid { width: 218px; }
.tm-right { width: 142px; }
.tm-nat { height: 224px; background: #c3ae78; }
.tm-ali { height: 117px; background: #fdb913; }
.tm-cur { height: 138px; background: #0cb093; }
.tm-r2 { height: 130px; }
.tm-r3 { height: 71px; }
.tm-pir { width: 106px; background: #6d9cd8; }
.tm-dot { width: 34px; background: #6cace0; }
.tm-qu { width: 57px; background: #5ba7fb; }
.tm-c2 { width: 43px; gap: 1px; }
.tm-c3 { width: 38px; }
.tm-v { height: 37px; background: #b58e81; }
.tm-leo { height: 33px; background: #a58d6b; }
.tm-yl { height: 35px; background: #fedd5e; }
.tm-tl { height: 34px; background: #11806a; }
.tm-c2 .cell, .tm-c3 .cell { padding: 6px 5px 0; }
.tm-r3 > .cell { height: 71px; }
.tm-r2 > .cell { height: 130px; }

/* filter strip */
.filters { width: 41px; flex: none; background: #3a3a3a; border-left: 1px solid #a6a6a6; color: #fff; display: flex; flex-direction: column; align-items: center; padding-top: 17px; }
.f-coll { margin-right: 2px; }
.f-fun { margin-top: 18px; margin-left: 4px; }
.f-text { margin-top: 13px; writing-mode: vertical-rl; text-orientation: sideways; font-weight: 700; font-size: 18px; line-height: 20px; letter-spacing: 1px; margin-left: 1px; }

/* page tabs */
.pagebar { height: 44px; flex: none; background: #f3f2f1; display: flex; }
.view-switch { position: relative; width: 159px; flex: none; display: flex; border-right: 1px solid #a19f9d; padding-left: 13px; }
.vs { width: 30px; height: 44px; display: flex; justify-content: center; padding-top: 9px; }
.vs.on { height: 38px; border-bottom: 3px solid #117865; border-radius: 2px; }
.vs-phone { margin-left: 24px; padding-top: 6px; }
.arr { margin-top: 12px; }
.a-l { margin-left: 19px; }
.a-r { margin-left: 20px; }
.ptab { width: 97.500px; flex: none; background: #fff; border-right: 1px solid #c8c6c4; display: flex; align-items: center; justify-content: center; font-size: 14.67px; }
.ptab.cur { border-bottom: 5px solid #117865; padding-top: 4px; }
.padd { width: 49px; flex: none; background: #117865; display: flex; align-items: center; justify-content: center; padding-bottom: 2px; }

/* visualizations pane */
.viz { width: 226px; flex: none; background: #f3f2f1; padding: 0 6px 0 6px; border-right: 1px solid #e1dfdd; }
.pane-head { height: 48px; padding-top: 2px; display: flex; align-items: center; justify-content: space-between; font-size: 20px; color: #252423; line-height: 26px; }
.viz .pane-head { margin: 0 5px 0 6px; }
.sub { height: 20px; line-height: 20px; margin: -1px 0 0 6px; font-size: 14.67px; }
.vtabs { height: 40px; margin-top: 5px; display: flex; align-items: center; margin-left: 5px; }
.vt { height: 40px; width: 40px; display: flex; align-items: center; justify-content: center; }
.vt.on { background: #c8c6c4; border-radius: 3px; }
.vt:nth-child(2) { margin-left: 45px; }
.vt:nth-child(3) { margin-left: 40px; }
.notch { height: 16px; margin-left: -5px; }
.vgrid { margin: 8px -6px 0 3px; height: 251px; width: 216px; display: grid; grid-template-columns: repeat(6, 35px); grid-auto-rows: 35px; place-items: center; align-content: start; border-bottom: 2px solid #e1dfdd; }
.vi { width: 23px; height: 23px; display: block; }
.vi-sel { width: 30px; height: 30px; border: 1px solid #252423; display: flex; align-items: center; justify-content: center; }
.vi-txt { display: flex; align-items: center; justify-content: center; color: #1f78c1; font-weight: 700; font-family: "Noto Sans", sans-serif; }
.big-r { font-size: 21px; }
.big-py { font-size: 21px; width: 30px; }
.l { fill: none; stroke: #484644; stroke-width: 1.400; }
.l.th { stroke-width: 1; }
.f { fill: #6cb1e8; stroke: #1f78c1; stroke-width: 1.200; }
.f.lt { fill: #2b88d8; }
.s { fill: #c8c6c4; stroke: #8a8886; stroke-width: 1; }
.n { fill: #fff; stroke: #605e5c; stroke-width: 1.100; }
.n.th { stroke-width: 1; }
.n.th2 { stroke: #484644; stroke-width: 1.400; }
.n.dk { stroke: #484644; stroke-width: 1.300; }
.k { fill: #3b3a39; }
.o { fill: #f7a81b; stroke: #ca5010; stroke-width: .8; }
.th3 { stroke: #8a8886; stroke-width: 2.400; fill: none; }
.bl-l { fill: none; stroke: #2b88d8; stroke-width: 1.500; }
.bl-h { fill: none; stroke: #1f78c1; stroke-width: 2; }
.bl-f { fill: #2b88d8; }
.w-l { stroke: #fff; stroke-width: .8; fill: none; }
.ring-g { fill: none; stroke: #a9c7e0; stroke-width: 5; }
.ring-b { fill: none; stroke: #2b88d8; stroke-width: 5; }
.globe { fill: #d5e8f5; stroke: #484644; stroke-width: .8; }
.gr { fill: #2f9e58; }
.rd { fill: #e8484f; }
.az1 { fill: #2878c8; }
.az2 { fill: #5cb8ea; }
.arc-b { fill: none; stroke: #2b88d8; stroke-width: 4; }
.n123 { font: 400 10px "Liberation Sans", sans-serif; fill: #2b88d8; text-anchor: middle; }
.bubble { fill: #fff; stroke: #1f78c1; stroke-width: 1.800; }
.b3 { fill: none; stroke: #484644; stroke-width: 2.600; }
.k-d { fill: #252423; }
.bl-d { fill: #1f78c1; }

.fld-label { margin-left: 11px; height: 20px; line-height: 20px; font-size: 14px; color: #484644; }
.l-first { margin-top: 10px; }
.well { margin-top: 6px; height: 44px; width: 213px; background: #fff; border: 1px dashed #c8c6c4; padding: 4px; }
.pill { height: 28px; background: #edebe9; border: 1px solid #bdbbb9; border-radius: 2px; display: flex; align-items: center; padding: 0 5px 0 5px; font-size: 14.67px; color: #484644; }
.pill span { margin-right: auto; }
.p-x { margin-left: 8px; }
.l-drill { margin-top: 14px; }
.tg-row { height: 20px; margin-left: 11px; display: flex; align-items: center; justify-content: space-between; width: 182px; font-size: 14.67px; color: #484644; }
.tg-row.r1, .tg-row.r2 { margin-top: 12px; }
.tg { width: 40px; height: 20px; border-radius: 10px; position: relative; display: flex; align-items: center; flex: none; margin-top: 1px; }
.tg.off { background: #fff; border: 1px solid #8a8886; }
.tg.off::after { content: ""; position: absolute; left: 6px; top: 4px; width: 10px; height: 10px; border-radius: 50%; background: #605e5c; }
.tg.onn { background: #117865; padding-left: 8px; }
.tg.onn::after { content: ""; position: absolute; right: 5px; top: 5px; width: 10px; height: 10px; border-radius: 50%; background: #fff; }
.add-well { margin-top: 15px; height: 31px; width: 213px; background: #fff; border: 1px dashed #c8c6c4; padding-left: 11px; line-height: 30px; font-size: 14.67px; color: #484644; }

/* data pane */
.data { width: 226px; flex: none; background: #f3f2f1; }
.data .pane-head { margin: 0 10px 0 12px; }
.search { margin: 9px 0 0 7px; width: 213px; height: 30px; background: #fff; border: 1px solid #d2d0ce; border-bottom-color: #605e5c; border-radius: 4px; display: flex; align-items: center; padding-left: 14px; color: #8a8886; font-size: 17px; gap: 10px; }
.tree { margin-top: 11px; color: #484644; font-size: 14px; }
.tr { display: flex; align-items: center; height: 30px; padding-left: 20px; white-space: nowrap; }
.cv { width: 9px; }
.cv.open { width: 14px; margin-left: -3px; margin-right: -2px; }
.ti { margin-left: 8.500px; margin-right: 7px; }
.ti-wrap { position: relative; display: block; }
.badge { position: absolute; left: 15px; top: 8px; z-index: 1; }
.tr.ch { padding-left: 39px; }
.cv-sp { width: 9px; flex: none; }
.cb { width: 15px; height: 15px; margin-left: 7px; border: 1px solid #8a8886; border-radius: 2px; background: #f8f8f8; flex: none; display: flex; align-items: center; justify-content: center; }
.cb.chk { background: #117865; border-color: #117865; }
.fi { width: 24px; margin: 0 3px 0 6px; display: flex; justify-content: center; flex: none; }

/* status bar */
.status { height: 30px; flex: none; background: #f3f2f1; border-top: 2px solid #e1dfdd; display: flex; align-items: center; padding: 0 23px 2px 5px; font-size: 14px; color: #605e5c; }
.zoomer { margin-left: auto; display: flex; align-items: center; }
.z-sign { width: 10px; text-align: center; font-size: 15px; }
.z-track { position: relative; width: 126px; height: 1px; margin: 0 5px; background: #8a8886; }
.z-thumb { position: absolute; left: 52px; top: -6px; width: 4px; height: 13px; background: #605e5c; }
.z-pct { margin: 0 24px 0 16px; font-size: 14px; }
```
